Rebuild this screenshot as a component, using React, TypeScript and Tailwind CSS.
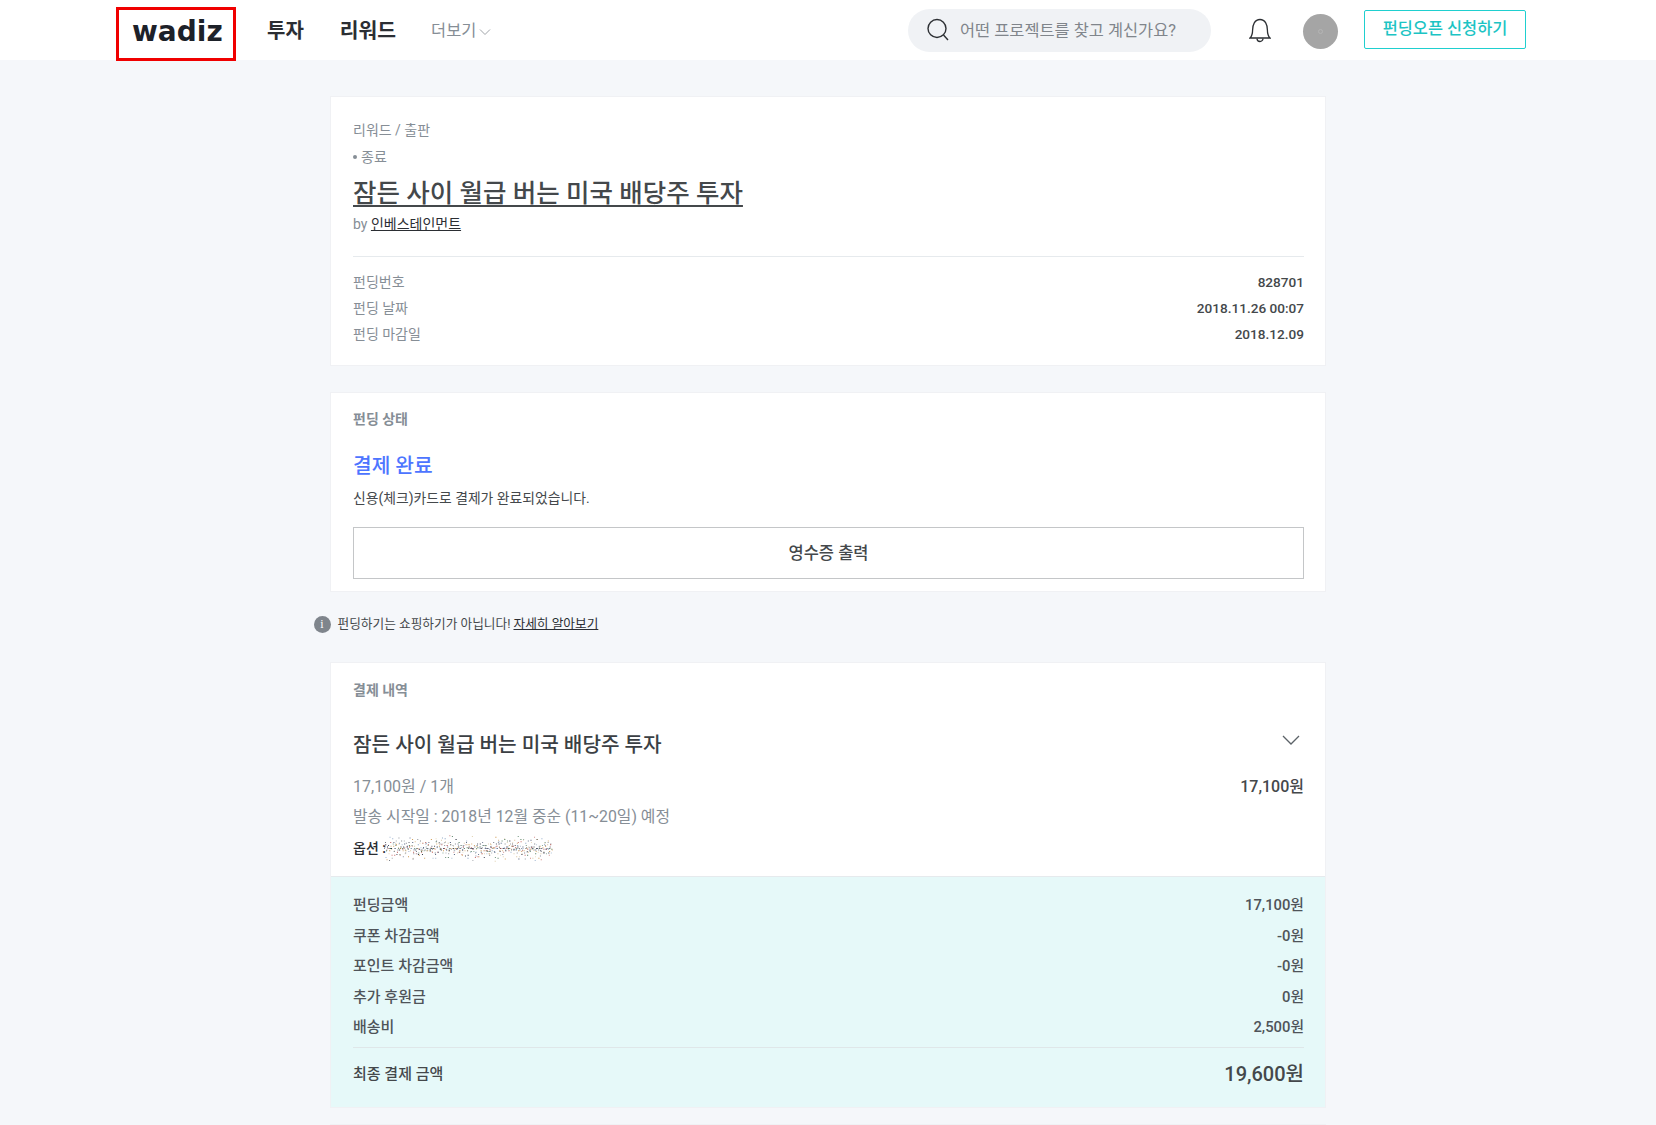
const FONT = "font-['Roboto','Noto_Sans_CJK_KR',sans-serif]";

const totals = [
  { label: '펀딩금액', value: '17,100원' },
  { label: '쿠폰 차감금액', value: '-0원' },
  { label: '포인트 차감금액', value: '-0원' },
  { label: '추가 후원금', value: '0원' },
  { label: '배송비', value: '2,500원' },
];

const fundingInfo = [
  { label: '펀딩번호', value: '828701' },
  { label: '펀딩 날짜', value: '2018.11.26 00:07' },
  { label: '펀딩 마감일', value: '2018.12.09' },
];

// blurred-out option text in the screenshot
const NOISE_COLORS = ['#2f3d5f', '#c98d3a', '#6f747d', '#b8433f', '#3f6f50', '#d7c49a', '#1b1f30', '#7f9cc0'];
const noiseDots = Array.from({ length: 560 }, (_, i) => {
  const a = (i * 7919) % 1000;
  const b = (i * 104729) % 997;
  const spread = 4 + (b % 15);
  return {
    x: (a / 1000) * 168,
    y: 14 + (b % 2 === 0 ? 1 : -1) * ((a * 13) % spread) * 0.75,
    color: NOISE_COLORS[i % NOISE_COLORS.length],
    opacity: 0.55 + ((i * 31) % 45) / 100,
  };
});

const Card: React.FC<{ className?: string; children: React.ReactNode }> = ({ className = '', children }) => (
  <section className={`w-[996px] bg-white border border-[#f0f1f4] ${className}`}>{children}</section>
);

const App = () => {
  return (
    <div className={`${FONT} h-[1125px] overflow-hidden bg-[#f5f7fa] text-[#44484b]`}>
      <header className="relative flex h-[60px] items-center bg-white pl-[132px] pr-[130px]">
        <div className="w-[90px] whitespace-nowrap pt-[3px] font-['DejaVu_Sans',sans-serif] text-[28px] font-bold leading-none text-[#1d2129]">
          wadiz
        </div>
        <div className="absolute left-[116px] top-[7px] h-[54px] w-[120px] border-[3px] border-[#f00000]" />
        <nav className="ml-[45px] flex items-center pt-[2px]">
          <a className="text-[20px] font-bold text-[#2b2e33]">투자</a>
          <a className="ml-[36px] text-[20.400px] font-bold text-[#2b2e33]">리워드</a>
          <a className="ml-[35px] flex items-center text-[16.400px] text-[#868e96]">
            더보기
            <svg className="ml-[3px] mt-[3px]" width="12" height="8" viewBox="0 0 12 8" fill="none" stroke="#a0a4a9" strokeWidth="1">
              <path d="M1 1.5l5 5 5-5" />
            </svg>
          </a>
        </nav>
        <div className="ml-auto flex h-[43px] w-[303px] items-center rounded-full bg-[#f0f2f5] pl-[18px]">
          <svg width="24" height="26" viewBox="0 0 24 26" fill="none" stroke="#2c2f33" strokeWidth="1.4">
            <circle cx="11" cy="11.5" r="9" />
            <path d="M17.5 18l4.500 5" />
          </svg>
          <span className="ml-[10px] pt-[2px] text-[16.400px] text-[#80858b]">어떤 프로젝트를 찾고 계신가요?</span>
        </div>
        <svg className="ml-[38px]" width="22" height="26" viewBox="0 0 22 26" fill="none" stroke="#2c2f33" strokeWidth="1.3">
          <path d="M1 21h20c-2-2-2.600-4-2.600-8 0-5-2-10.500-7.400-10.500S3.600 8 3.600 13c0 4-.6 6-2.600 8z" />
          <path d="M8 21.500a3 3 0 0 0 6 0" />
        </svg>
        <div className="ml-[32px] mt-[2px] flex h-[35px] w-[35px] items-center justify-center rounded-full bg-[#a5a5a5]">
          <div className="h-[5px] w-[5px] rounded-full border border-[#b5b5b5]" />
        </div>
        <button className="-mt-[2px] ml-[26px] h-[39px] w-[162px] rounded-[2px] border border-[#1fcfcf] text-[16.400px] font-medium text-[#1cc4c4]">
          펀딩오픈 신청하기
        </button>
      </header>

      <main className="flex flex-col items-center pt-[36px]">
        <Card className="h-[270px] pl-[22px] pr-[21px] pt-[23px]">
          <p className="text-[14px] leading-[20px] text-[#868e96]">리워드 / 출판</p>
          <p className="mt-[7px] flex items-center text-[14px] leading-[20px] text-[#868e96]">
            <span className="mr-[4px] h-[4px] w-[4px] rounded-full bg-[#868e96]" />
            종료
          </p>
          <h1 className="mt-[8px] text-[25.500px] font-medium leading-[36px] text-[#44484b] underline decoration-2 underline-offset-[3px]">
            잠든 사이 월급 버는 미국 배당주 투자
          </h1>
          <p className="mt-[3px] text-[14px] leading-[20px] text-[#868e96]">
            by <span className="text-[#2b2e33] underline">인베스테인먼트</span>
          </p>
          <div className="mt-[22px] border-t border-[#e6eaed] pt-[12px]">
            {fundingInfo.map((row) => (
              <div key={row.label} className="flex h-[26px] items-center justify-between text-[14px]">
                <span className="text-[#868e96]">{row.label}</span>
                <span className="text-[13.600px] font-medium text-[#44484b]">{row.value}</span>
              </div>
            ))}
          </div>
        </Card>

        <Card className="mt-[26px] h-[200px] pl-[22px] pr-[21px] pt-[16px]">
          <h2 className="text-[14px] font-bold leading-[20px] text-[#868e96]">펀딩 상태</h2>
          <p className="mt-[22px] text-[20.300px] font-medium leading-[30px] text-[#4d75ff]">결제 완료</p>
          <p className="mt-[7px] text-[13.850px] leading-[20px] text-[#44484b]">신용(체크)카드로 결제가 완료되었습니다.</p>
          <button className="mt-[19px] h-[52px] w-full border border-[#c4c6c8] pt-[2px] text-[16.500px] font-medium text-[#44484b]">
            영수증 출력
          </button>
        </Card>

        <div className="mt-[22px] flex h-[20px] w-[1029px] items-center text-[12.700px] text-[#44484b]">
          <span className="flex h-[17px] w-[17px] items-center justify-center rounded-full bg-[#7f858c] font-['Liberation_Serif',serif] text-[12px] text-white">
            i
          </span>
          <span className="ml-[7px]">펀딩하기는 쇼핑하기가 아닙니다!</span>
          <a className="ml-[3px] text-[#2b2e33] underline">자세히 알아보기</a>
        </div>

        <Card className="mt-[28px] h-[446px]">
          <div className="h-[213px] pl-[22px] pr-[21px] pt-[17px]">
            <h2 className="text-[14px] font-bold leading-[20px] text-[#868e96]">결제 내역</h2>
            <div className="mt-[30px] flex items-start justify-between">
              <p className="text-[20.200px] font-medium leading-[30px] text-[#3b3f44]">잠든 사이 월급 버는 미국 배당주 투자</p>
              <svg className="mr-[4px] mt-[5px]" width="18" height="11" viewBox="0 0 18 11" fill="none" stroke="#5c6268" strokeWidth="1.3">
                <path d="M1 1l8 8 8-8" />
              </svg>
            </div>
            <div className="mt-[15px] flex items-center justify-between text-[16px] leading-[24px]">
              <span className="text-[#868e96]">17,100원 / 1개</span>
              <span className="font-medium text-[#44484b]">17,100원</span>
            </div>
            <p className="mt-[6px] text-[15.850px] leading-[24px] text-[#868e96]">발송 시작일 : 2018년 12월 중순 (11~20일) 예정</p>
            <div className="mt-[6px] flex h-[26px] items-center">
              <span className="text-[14px] font-medium text-[#2b2e33]">옵션 :</span>
              <svg className="-ml-[2px]" width="170" height="28" viewBox="0 0 170 28">
                {noiseDots.map((dot, i) => (
                  <rect key={i} x={dot.x} y={dot.y} width="1" height="1" fill={dot.color} opacity={dot.opacity} />
                ))}
              </svg>
            </div>
          </div>
          <div className="h-[231px] border-t border-[#e6eaed] bg-[#e6f9f9] pl-[22px] pr-[21px] pt-[13px]">
            {totals.map((row) => (
              <div key={row.label} className="flex h-[30.500px] items-center justify-between text-[15px] font-medium text-[#4f5459]">
                <span>{row.label}</span>
                <span className="text-[14.800px]">{row.value}</span>
              </div>
            ))}
            <div className="mt-[4px] flex h-[54px] items-center justify-between border-t border-[#dfe7e9] text-[#44484b]">
              <span className="text-[15px] font-medium">최종 결제 금액</span>
              <span className="text-[20px] font-medium">19,600원</span>
            </div>
          </div>
        </Card>

        <Card className="mt-[16px] h-[40px]">
          <div />
        </Card>
      </main>
    </div>
  );
};

export default App;
